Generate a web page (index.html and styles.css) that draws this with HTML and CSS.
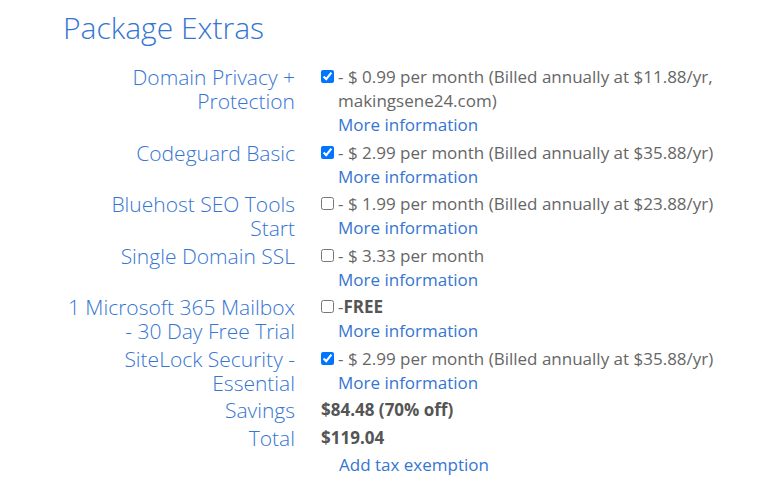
FILE: index.html
```html
<!DOCTYPE html>
<html>
<head>
<meta charset="utf-8">
<link rel="stylesheet" href="styles.css">
</head>
<body>
<div class="page">
  <h1 class="title">Package Extras</h1>
  <div class="extras">
    <div class="label">Domain Privacy + Protection</div>
    <div class="value">
      <input type="checkbox" class="check" checked>
      <div class="desc">
        <div>- $ 0.99 per month (Billed annually at $11.88/yr, makingsene24.com)</div>
        <a class="link" href="#">More information</a>
      </div>
    </div>

    <div class="label">Codeguard Basic</div>
    <div class="value">
      <input type="checkbox" class="check" checked>
      <div class="desc">
        <div>- $ 2.99 per month (Billed annually at $35.88/yr)</div>
        <a class="link" href="#">More information</a>
      </div>
    </div>

    <div class="label">Bluehost SEO Tools Start</div>
    <div class="value">
      <input type="checkbox" class="check">
      <div class="desc">
        <div>- $ 1.99 per month (Billed annually at $23.88/yr)</div>
        <a class="link" href="#">More information</a>
      </div>
    </div>

    <div class="label">Single Domain SSL</div>
    <div class="value">
      <input type="checkbox" class="check">
      <div class="desc">
        <div>- $ 3.33 per month</div>
        <a class="link" href="#">More information</a>
      </div>
    </div>

    <div class="label">1 Microsoft 365 Mailbox - 30 Day Free Trial</div>
    <div class="value">
      <input type="checkbox" class="check">
      <div class="desc">
        <div>-<strong>FREE</strong></div>
        <a class="link" href="#">More information</a>
      </div>
    </div>

    <div class="label">SiteLock Security - Essential</div>
    <div class="value">
      <input type="checkbox" class="check" checked>
      <div class="desc">
        <div>- $ 2.99 per month (Billed annually at $35.88/yr)</div>
        <a class="link" href="#">More information</a>
      </div>
    </div>

    <div class="label">Savings</div>
    <div class="value"><strong>$84.48 (70% off)</strong></div>

    <div class="label">Total</div>
    <div class="value total">
      <strong>$119.04</strong>
      <a class="link indent" href="#">Add tax exemption</a>
    </div>
  </div>
</div>
</body>
</html>
```

FILE: styles.css
```css
html, body {
  margin: 0;
  padding: 0;
  background: #ffffff;
}

.page {
  padding: 10px 0 0 63px;
  font-family: "Open Sans", "Liberation Sans", sans-serif;
}

.title {
  margin: 0 0 19px 0;
  font-size: 30px;
  line-height: 36px;
  font-weight: 300;
  color: #3575d3;
}

.extras {
  display: grid;
  grid-template-columns: 232px 410px;
  column-gap: 26px;
  row-gap: 3.5px;
}

.label {
  text-align: right;
  font-size: 21px;
  line-height: 24px;
  font-weight: 300;
  color: #3575d3;
}

.value {
  display: flex;
  align-items: flex-start;
  font-size: 17px;
  line-height: 24px;
  color: #666666;
}

.value strong {
  font-weight: 700;
  color: #555555;
}

.check {
  flex: none;
  width: 13px;
  height: 13px;
  margin: 5px 4px 0 0;
}

.desc {
  display: flex;
  flex-direction: column;
  align-items: flex-start;
}

.link {
  color: #3575d3;
  text-decoration: none;
}

.total {
  flex-direction: column;
  align-items: flex-start;
}

.indent {
  margin: 3px 0 0 18px;
}
```
